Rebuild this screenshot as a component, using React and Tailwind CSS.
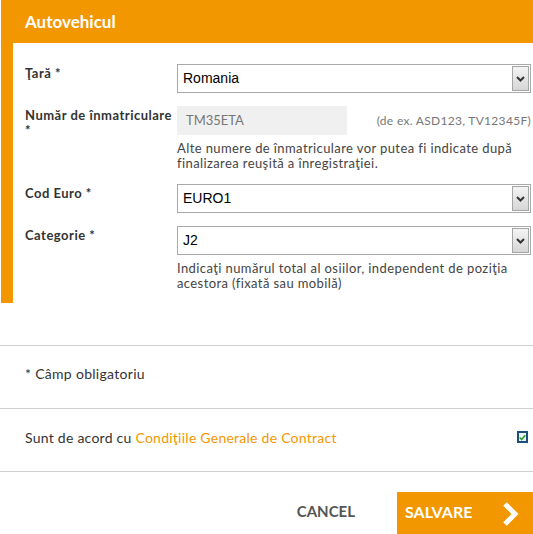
import React from "react";

const font = { fontFamily: "Lato, 'Open Sans', sans-serif" };

function Select({ value }) {
  return (
    <div className="flex h-[29px] items-stretch border border-[#a9a9a9] bg-white">
      <div className="flex flex-1 items-center pl-[5px] text-[14px] text-black" style={{ fontFamily: "'Liberation Sans', Arial, sans-serif" }}>
        {value}
      </div>
      <div className="my-[1px] mr-[1px] flex w-[17px] items-center justify-center border border-[#a5a5a5] bg-gradient-to-b from-[#f4f4f4] to-[#d6d6d6]">
        <svg width="9" height="6" viewBox="0 0 9 6">
          <polyline points="1,1 4.5,4.5 8,1" fill="none" stroke="#333" strokeWidth="2" />
        </svg>
      </div>
    </div>
  );
}

function Label({ children }) {
  return <div className="pt-[2px] pr-1 text-[13px] font-bold leading-[15px] tracking-[0.5px] text-[#333]">{children}</div>;
}

export default function App() {
  return (
    <div className="w-[533px] bg-white" style={font}>
      <div className="ml-px">
        <div className="flex h-[43px] items-center bg-[#f39700] pl-[24px] text-[17px] font-bold text-white">
          Autovehicul
        </div>
        <div className="border-l-[12px] border-[#f39700] pb-[12px] pl-[12px] pr-[2px] pt-[21px]">
          <div className="grid grid-cols-[152px_1fr] gap-y-[13px]">
            <Label>Ţară *</Label>
            <Select value="Romania" />

            <Label>
              Număr de înmatriculare
              <br />*
            </Label>
            <div>
              <div className="flex items-center justify-between">
                <div className="flex h-[29px] w-[170px] items-center bg-[#f0f0f0] pl-[9px] text-[13px] text-[#777]">TM35ETA</div>
                <div className="text-[12px] tracking-[0.3px] text-[#777]">(de ex. ASD123, TV12345F)</div>
              </div>
              <div className="mt-[6px] text-[13px] leading-[15px] tracking-[0.4px] text-[#444]">
                Alte numere de înmatriculare vor putea fi indicate după finalizarea reuşită a înregistraţiei.
              </div>
            </div>

            <Label>Cod Euro *</Label>
            <Select value="EURO1" />

            <Label>Categorie *</Label>
            <div>
              <Select value="J2" />
              <div className="mt-[6px] text-[13px] leading-[15px] tracking-[0.4px] text-[#444]">
                Indicaţi numărul total al osiilor, independent de poziţia acestora (fixată sau mobilă)
              </div>
            </div>
          </div>
        </div>
      </div>

      <div className="mt-[42px] border-t border-[#cfcfcf]">
        <div className="flex h-[62px] items-center pb-[8px] pl-[25px] text-[14px] tracking-[0.3px] text-[#333]">* Câmp obligatoriu</div>
      </div>
      <div className="border-t border-[#cfcfcf]">
        <div className="flex h-[62px] items-center justify-between pb-[6px] pl-[25px] pr-[5px] text-[14px] tracking-[0.25px] text-[#333]">
          <div>
            Sunt de acord cu <span className="text-[#f39700]">Condiţiile Generale de Contract</span>
          </div>
          <div className="flex h-[12px] w-[11px] items-center justify-center border-2 border-[#1d4f7c] bg-[#eef3f8]">
            <svg width="8" height="7" viewBox="0 0 8 7">
              <polyline points="0.8,3.5 3,5.8 7.2,0.8" fill="none" stroke="#2ea02e" strokeWidth="1.8" />
            </svg>
          </div>
        </div>
      </div>
      <div className="border-t border-[#cfcfcf]">
        <div className="flex items-start justify-end pt-[20px]">
          <div className="mt-[9px] mr-[42px] text-[15px] font-bold leading-[20px] text-[#555]">CANCEL</div>
          <div className="flex h-[43px] w-[136px] items-center justify-between bg-[#f39700] pb-[4px] pl-[8px] pr-[13px]">
            <span className="text-[16px] font-bold text-white">SALVARE</span>
            <svg width="18" height="26" viewBox="0 0 18 26" className="mt-[4px]">
              <polyline points="3,3 13,13 3,23" fill="none" stroke="white" strokeWidth="5" />
            </svg>
          </div>
        </div>
      </div>
    </div>
  );
}
